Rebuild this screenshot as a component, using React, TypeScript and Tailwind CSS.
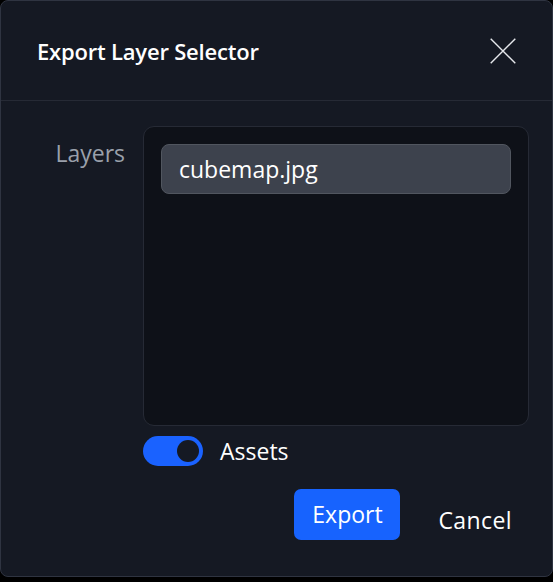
import React from "react";

export default function App() {
  return (
    <div className="w-[553px] h-[582px] bg-black relative overflow-hidden" style={{ fontFamily: "'Open Sans', Lato, sans-serif" }}>
      <div className="w-[553px] h-[577px] bg-[#151923] border border-[#2f3441] rounded-[8px] flex flex-col">
        <div className="h-[100px] flex items-center justify-between pl-[36px] pr-[36px] border-b border-[#262a35] shrink-0">
          <div className="text-[22px] font-semibold text-white leading-none tracking-[-0.2px]">Export Layer Selector</div>
          <svg width="26" height="26" viewBox="0 0 26 26">
            <path d="M0.7 0.7 L25.3 25.3 M25.3 0.7 L0.7 25.3" stroke="#e6e8ec" strokeWidth="1.4" />
          </svg>
        </div>
        <div className="flex pt-[25px] pl-[50px] pr-[23px]">
          <div className="w-[74px] text-right text-[23px] text-[#9aa0ab] pt-[16px] leading-none">Layers</div>
          <div className="ml-[18px] flex-1 flex flex-col">
            <div className="h-[300px] bg-[#0e1118] border border-[#262a35] rounded-[11px] p-[17px]">
              <div className="h-[50px] bg-[#3d424d] border border-[#51565f] rounded-[8px] flex items-center pl-[17px] text-[23px] text-white">
                cubemap.jpg
              </div>
            </div>
            <div className="flex items-center mt-[10px]">
              <div className="w-[60px] h-[30px] rounded-full bg-[#1a62ff] flex items-center justify-end pr-[4px]">
                <div className="w-[22px] h-[22px] rounded-full bg-[#151923]" />
              </div>
              <div className="ml-[17px] text-[23px] text-white leading-none">Assets</div>
            </div>
            <div className="flex items-center justify-end mt-[23px] pr-[17px]">
              <div className="w-[106px] h-[51px] rounded-[7px] bg-[#1763fe] flex items-center justify-center text-[23px] text-white">Export</div>
              <div className="ml-[38px] text-[23px] tracking-[0.4px] text-white mt-[11px]">Cancel</div>
            </div>
          </div>
        </div>
      </div>
    </div>
  );
}
